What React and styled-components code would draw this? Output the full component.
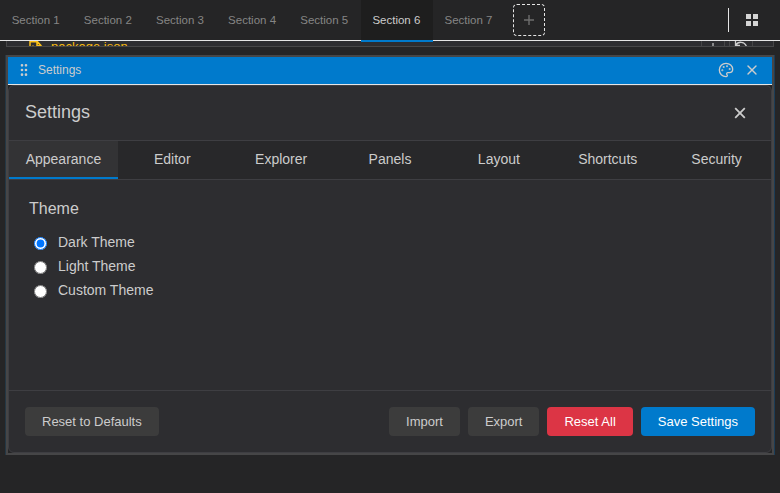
import React from 'react';
import styled, { createGlobalStyle, css } from 'styled-components';
import { Palette, GripVertical, X } from 'lucide-react';

const GlobalStyle = createGlobalStyle`
  * { box-sizing: border-box; }
  body {
    margin: 0;
    background: #252526;
    color: #cccccc;
    font-family: "Liberation Sans", Arial, sans-serif;
    overflow: hidden;
  }
  button { font-family: inherit; border: 0; padding: 0; background: none; color: inherit; }
`;

const Page = styled.div`
  display: flex;
  flex-direction: column;
  height: 493px;
  width: 780px;
`;

const TopBar = styled.nav`
  display: flex;
  align-items: center;
  height: 41px;
  flex: none;
  border-bottom: 1px solid #e5e5e5;
`;

const SectionTab = styled.button`
  height: 42px;
  margin-bottom: -1px;
  align-self: flex-start;
  flex: none;
  width: 72.15px;
  padding: 0 0.8px 0 0;
  font-size: 11.5px;
  color: #858585;
  border-bottom: 2px solid transparent;
  position: relative;
  z-index: 1;
  ${(p) => p.$active && css`
    background: #1e1e1e;
    color: #cccccc;
    border-bottom-color: #007acc;
  `}
`;

const AddButton = styled.button`
  display: grid;
  place-items: center;
  width: 32px;
  height: 32px;
  margin-left: 8px;
  border: 1px dashed #e5e5e5;
  border-radius: 4px;
  color: #6e6e6e;
`;

const Divider = styled.div`
  width: 1px;
  height: 24px;
  margin-left: auto;
  margin-right: 17px;
  background: #e5e5e5;
`;

const GridButton = styled.button`
  display: flex;
  margin-right: 22px;
`;

const FileStrip = styled.div`
  display: flex;
  justify-content: space-between;
  height: 6px;
  margin: 0 6px;
  flex: none;
  overflow: hidden;
  background: #2d2d30;
  border: 1px solid #464647;
  border-top: 0;
`;

const FileName = styled.div`
  display: flex;
  gap: 8px;
  padding-left: 22px;
  font-size: 13px;
  line-height: 15px;
  color: #f8bb13;
  span { margin-top: -2px; }
  svg { flex: none; }
`;

const StripTools = styled.div`
  display: flex;
  gap: 4px;
  padding-right: 20px;
`;

const StripTool = styled.div`
  width: 24px;
  height: 12px;
  border: 1px solid #464647;
  border-top: 0;
  display: flex;
  justify-content: center;
`;

const Panel = styled.section`
  display: flex;
  flex-direction: column;
  height: 400px;
  margin: 8px 6px 0;
  border: 2px solid #464647;
  box-shadow: -1px 0 0 #243744, 1px 0 0 #1c3d57;
`;

const PanelHeader = styled.header`
  display: flex;
  align-items: center;
  height: 28px;
  flex: none;
  padding: 0 12px 1px 8px;
  background: #007acc;
  border-bottom: 1px solid #e5e5e5;
  font-size: 12px;
`;

const PanelTitle = styled.span`
  margin-left: 6px;
  flex: 1;
`;

const PanelActions = styled.div`
  display: flex;
  align-items: center;
  gap: 10px;
`;

const Dialog = styled.div`
  display: flex;
  flex-direction: column;
  flex: 1;
  background: #2d2d30;
  border: 1px solid #3e3e42;
  border-radius: 6px;
  overflow: hidden;
`;

const DialogHeader = styled.div`
  display: flex;
  align-items: center;
  justify-content: space-between;
  height: 55px;
  padding: 0 25px 2px 16px;
  border-bottom: 1px solid #3e3e42;
  h2 { margin: 0; font-size: 18px; font-weight: 400; }
  svg { margin-top: 2px; }
`;

const TabList = styled.div`
  display: flex;
  height: 39px;
  background: #252526;
  border-bottom: 1px solid #3e3e42;
`;

const SettingTab = styled.button`
  flex: 1 1 0;
  font-size: 14px;
  border-bottom: 2px solid ${(p) => (p.$active ? '#007acc' : 'transparent')};
  background: ${(p) => (p.$active ? '#333335' : '#28282a')};
`;

const Content = styled.div`
  flex: 1;
  padding: 20px;
  h3 { margin: 0 0 12px; font-size: 16px; line-height: 18px; font-weight: 400; }
`;

const RadioRow = styled.label`
  display: flex;
  align-items: center;
  height: 24px;
  font-size: 14px;
  input { width: 13px; height: 13px; margin: 3px 11px 0 5px; }
`;

const Footer = styled.footer`
  display: flex;
  justify-content: space-between;
  align-items: center;
  height: 62px;
  padding: 0 16px;
  border-top: 1px solid #3e3e42;
`;

const ButtonGroup = styled.div`
  display: flex;
  gap: 8px;
`;

const tones = {
  neutral: ['#3c3c3c', '#cccccc'],
  danger: ['#dc3545', '#ffffff'],
  primary: ['#007acc', '#ffffff'],
};

const ActionButton = styled.button`
  height: 29px;
  padding: 0 17px;
  font-size: 13px;
  border-radius: 4px;
  background: ${(p) => tones[p.$tone || 'neutral'][0]};
  color: ${(p) => tones[p.$tone || 'neutral'][1]};
`;

const Cross = () => (
  <svg width="12" height="12" viewBox="0 0 12 12" fill="none" stroke="currentColor" strokeWidth="1.8">
    <path d="M1.2 1.2 10.8 10.8M10.8 1.2 1.2 10.8" />
  </svg>
);

const sections = [1, 2, 3, 4, 5, 6, 7];
const settingTabs = ['Appearance', 'Editor', 'Explorer', 'Panels', 'Layout', 'Shortcuts', 'Security'];
const themes = ['Dark Theme', 'Light Theme', 'Custom Theme'];

export default function App() {
  return (
    <Page>
      <GlobalStyle />
      <TopBar>
        {sections.map((n) => (
          <SectionTab key={n} $active={n === 6}>Section {n}</SectionTab>
        ))}
        <AddButton aria-label="Add section">
          <svg width="10" height="10" viewBox="0 0 10 10" stroke="currentColor" strokeWidth="1.4">
            <path d="M5 0V10M0 5H10" />
          </svg>
        </AddButton>
        <Divider />
        <GridButton aria-label="Layout grid">
          <svg width="12" height="12" fill="#d4d4d4">
            <path d="M0 0h5v5H0zM7 0h5v5H7zM0 7h5v5H0zM7 7h5v5H7z" />
          </svg>
        </GridButton>
      </TopBar>
      <FileStrip>
        <FileName>
          <svg width="14" height="14" viewBox="0 0 14 14" fill="none" stroke="#fbc017" strokeWidth="1.5">
            <path d="M1 8V0.8H8.5L12 4.5V8M8 1V4.5H12M4 4.5V8" />
          </svg>
          <span>package.json</span>
        </FileName>
        <StripTools>
          <StripTool>
            <svg width="12" height="12" stroke="#aaaaaa" strokeWidth="1.5"><path d="M6 2V12" /></svg>
          </StripTool>
          <StripTool>
            <svg width="14" height="12" fill="none" stroke="#cccccc" strokeWidth="1.3"><path d="M1.5 0V4.5H6M1.8 4.2C4 .2 10.5 0 12.5 5.5" /></svg>
          </StripTool>
        </StripTools>
      </FileStrip>
      <Panel>
        <PanelHeader>
          <GripVertical size={16} />
          <PanelTitle>Settings</PanelTitle>
          <PanelActions>
            <Palette size={16} />
            <X size={16} />
          </PanelActions>
        </PanelHeader>
        <Dialog>
          <DialogHeader>
            <h2>Settings</h2>
            <Cross />
          </DialogHeader>
          <TabList>
            {settingTabs.map((t, i) => (
              <SettingTab key={t} $active={i === 0}>{t}</SettingTab>
            ))}
          </TabList>
          <Content>
            <h3>Theme</h3>
            {themes.map((t, i) => (
              <RadioRow key={t}>
                <input type="radio" name="theme" defaultChecked={i === 0} />
                {t}
              </RadioRow>
            ))}
          </Content>
          <Footer>
            <ActionButton>Reset to Defaults</ActionButton>
            <ButtonGroup>
              <ActionButton>Import</ActionButton>
              <ActionButton>Export</ActionButton>
              <ActionButton $tone="danger">Reset All</ActionButton>
              <ActionButton $tone="primary">Save Settings</ActionButton>
            </ButtonGroup>
          </Footer>
        </Dialog>
      </Panel>
    </Page>
  );
}
